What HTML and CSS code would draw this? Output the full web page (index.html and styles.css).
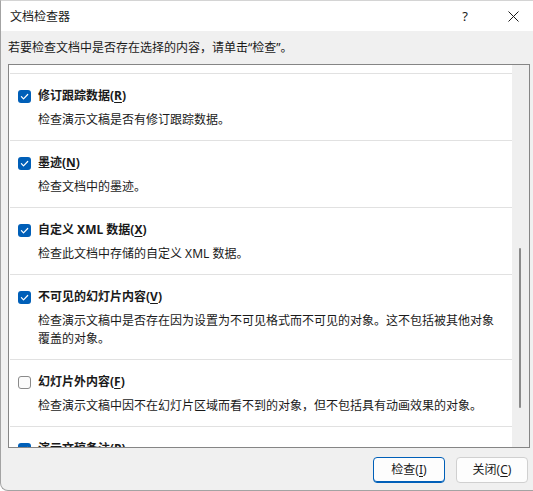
FILE: index.html
```html
<!DOCTYPE html>
<html lang="zh-CN">
<head>
<meta charset="utf-8">
<link rel="stylesheet" href="styles.css">
</head>
<body>
<div class="window">
  <div class="titlebar">
    <div class="title">文档检查器</div>
    <div class="help">?</div>
    <div class="close">
      <svg width="11" height="11" viewBox="0 0 11 11"><path d="M0.5 0.5 L10.5 10.5 M10.5 0.5 L0.5 10.5" stroke="#1a1a1a" stroke-width="1" fill="none"/></svg>
    </div>
  </div>
  <div class="body">
    <p class="intro">若要检查文档中是否存在选择的内容，请单击“检查”。</p>
    <div class="listbox">
      <div class="list">
        <div class="spacer"></div>
        <div class="item">
          <div class="head">
            <span class="cb checked"><svg width="13" height="13" viewBox="0 0 13 13"><path d="M3.4 6.7 L5.5 8.8 L9.7 4.5" stroke="#fff" stroke-width="1.2" fill="none" stroke-linecap="round" stroke-linejoin="round"/></svg></span>
            <span class="label">修订跟踪数据(<u>R</u>)</span>
          </div>
          <div class="desc">检查演示文稿是否有修订跟踪数据。</div>
        </div>
        <div class="item">
          <div class="head">
            <span class="cb checked"><svg width="13" height="13" viewBox="0 0 13 13"><path d="M3.4 6.7 L5.5 8.8 L9.7 4.5" stroke="#fff" stroke-width="1.2" fill="none" stroke-linecap="round" stroke-linejoin="round"/></svg></span>
            <span class="label">墨迹(<u>N</u>)</span>
          </div>
          <div class="desc">检查文档中的墨迹。</div>
        </div>
        <div class="item">
          <div class="head">
            <span class="cb checked"><svg width="13" height="13" viewBox="0 0 13 13"><path d="M3.4 6.7 L5.5 8.8 L9.7 4.5" stroke="#fff" stroke-width="1.2" fill="none" stroke-linecap="round" stroke-linejoin="round"/></svg></span>
            <span class="label">自定义 XML 数据(<u>X</u>)</span>
          </div>
          <div class="desc">检查此文档中存储的自定义 XML 数据。</div>
        </div>
        <div class="item">
          <div class="head">
            <span class="cb checked"><svg width="13" height="13" viewBox="0 0 13 13"><path d="M3.4 6.7 L5.5 8.8 L9.7 4.5" stroke="#fff" stroke-width="1.2" fill="none" stroke-linecap="round" stroke-linejoin="round"/></svg></span>
            <span class="label">不可见的幻灯片内容(<u>V</u>)</span>
          </div>
          <div class="desc">检查演示文稿中是否存在因为设置为不可见格式而不可见的对象。这不包括被其他对象覆盖的对象。</div>
        </div>
        <div class="item">
          <div class="head">
            <span class="cb"></span>
            <span class="label">幻灯片外内容(<u>F</u>)</span>
          </div>
          <div class="desc">检查演示文稿中因不在幻灯片区域而看不到的对象，但不包括具有动画效果的对象。</div>
        </div>
        <div class="item">
          <div class="head">
            <span class="cb checked"><svg width="13" height="13" viewBox="0 0 13 13"><path d="M3.4 6.7 L5.5 8.8 L9.7 4.5" stroke="#fff" stroke-width="1.2" fill="none" stroke-linecap="round" stroke-linejoin="round"/></svg></span>
            <span class="label">演示文稿备注(<u>P</u>)</span>
          </div>
          <div class="desc">检查演示文稿的演示者备注中的信息。</div>
        </div>
      </div>
      <div class="scrollbar"><div class="thumb"></div></div>
    </div>
    <div class="buttons">
      <button class="btn default">检查(<u>I</u>)</button>
      <button class="btn">关闭(<u>C</u>)</button>
    </div>
  </div>
</div>
</body>
</html>
```

FILE: styles.css
```css
* { box-sizing: border-box; }
html, body {
  margin: 0;
  padding: 0;
  width: 533px;
  height: 491px;
  overflow: hidden;
  background: #ffffff;
}
body {
  font-family: "Noto Sans", "Noto Sans CJK SC", sans-serif;
  font-size: 12px;
  color: #1a1a1a;
}
.window {
  width: 533px;
  height: 491px;
  border-left: 1px solid #a3a3a3;
  border-top: 1px solid #d4d4d4;
  border-bottom: 1px solid #a3a3a3;
  border-bottom-left-radius: 8px;
  background: #f0f0f0;
  display: flex;
  flex-direction: column;
  overflow: hidden;
}
.titlebar {
  height: 30px;
  background: #ffffff;
  display: flex;
  align-items: center;
  padding-right: 5px;
}
.title {
  flex: 1;
  padding-left: 9px;
  font-size: 12px;
  line-height: 16px;
  padding-top: 1px;
}
.help {
  width: 40px;
  text-align: center;
  font-size: 13px;
  line-height: 16px;
  margin-right: 13px;
}
.close {
  width: 30px;
  height: 16px;
  display: flex;
  align-items: center;
  justify-content: center;
}
.body {
  flex: 1;
  display: flex;
  flex-direction: column;
}
.intro {
  margin: 8px 0 7px 7px;
  line-height: 18px;
  height: 18px;
}
.listbox {
  margin-left: 7px;
  width: 522px;
  height: 384px;
  border: 1px solid #858585;
  background: #ffffff;
  display: flex;
  overflow: hidden;
}
.list {
  flex: 1;
  overflow: hidden;
}
.spacer {
  height: 8px;
}
.item {
  border-top: 1px solid #e1e1e1;
  margin-left: 1px;
  padding: 13px 0 11px 0;
}
.head {
  display: flex;
  align-items: center;
  height: 18px;
  padding-left: 8px;
}
.cb {
  width: 13px;
  height: 13px;
  border-radius: 3px;
  border: 1px solid #8a8a8a;
  background: #fbfbfb;
  display: inline-flex;
  margin-right: 7px;
  flex: none;
}
.cb.checked {
  border: none;
  background: #005fb8;
}
.label {
  font-weight: bold;
  line-height: 18px;
}
.desc {
  margin-top: 6px;
  padding-left: 28px;
  width: 491px;
  line-height: 18px;
}
.scrollbar {
  width: 17px;
  background: #efefef;
  position: relative;
}
.thumb {
  position: absolute;
  left: 7px;
  top: 183px;
  width: 2px;
  height: 160px;
  border-radius: 1px;
  background: #8a8a8a;
}
.buttons {
  display: flex;
  justify-content: flex-end;
  gap: 11px;
  margin-top: 9px;
  padding-right: 5px;
}
.btn {
  width: 72px;
  height: 26px;
  border: 1px solid #d0d0d0;
  border-radius: 4px;
  background: #fdfdfd;
  font-family: "Noto Sans", "Noto Sans CJK SC", sans-serif;
  font-size: 12px;
  color: #1a1a1a;
  padding: 0;
  line-height: 18px;
}
.btn.default {
  border-color: #005fb8;
  box-shadow: inset 0 -1px 0 #005fb8;
}
u {
  text-decoration-thickness: 1px;
  text-underline-offset: 2px;
}
```
